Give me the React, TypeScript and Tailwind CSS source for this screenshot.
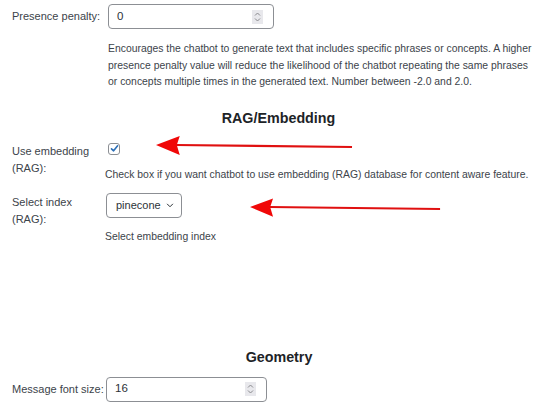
import React from 'react';

const font = { fontFamily: '"Liberation Sans", Arial, sans-serif' };

const Spinner = () => (
    <div className="absolute right-[10px] top-1/2 -translate-y-1/2 w-[11px] h-[14px] bg-[#e8e8ec] flex flex-col items-center justify-center">
        <svg width="7" height="12" viewBox="0 0 7 12" fill="none" stroke="#8a8a8e" strokeWidth="1">
            <path d="M1 4.5L3.5 2L6 4.5" />
            <path d="M1 7.5L3.5 10L6 7.5" />
        </svg>
    </div>
);

const NumberField = ({ value, width }: { value: string; width: string }) => (
    <div className={`relative shrink-0 ${width} h-[25px] border border-[#8c8f94] rounded-[4px] bg-white flex items-center pl-[8px] text-[11.5px] text-[#2c3338]`}>
        {value}
        <Spinner />
    </div>
);

const Arrow = ({ className }: { className: string }) => (
    <svg className={`absolute pointer-events-none ${className}`} viewBox="0 0 200 22" fill="none">
        <line x1="20" y1="10" x2="198" y2="12" stroke="#e01010" strokeWidth="2.2" />
        <polygon points="0,10 24,1 21,10 24,20" fill="#f00808" />
    </svg>
);

export default function App() {
    return (
        <div className="relative w-[536px] h-[402px] overflow-hidden bg-white text-[#3c434a]" style={font}>
            {/* Presence penalty */}
            <div className="flex items-center pt-[4px]">
                <div className="w-[108px] shrink-0 pl-[12px] text-[11px] whitespace-nowrap">Presence penalty:</div>
                <NumberField value="0" width="w-[166px]" />
            </div>
            <p className="ml-[108px] mt-[12px] w-[428px] text-[10.4px] leading-[16.5px]">
                Encourages the chatbot to generate text that includes specific phrases or concepts. A higher presence penalty value will reduce the likelihood of the chatbot repeating the same phrases or concepts multiple times in the generated text. Number between -2.0 and 2.0.
            </p>

            <h2 className="mt-[18px] pl-[21px] text-center text-[14.3px] leading-[18px] font-bold text-[#1d2327]">RAG/Embedding</h2>

            {/* Use embedding */}
            <div className="flex mt-[16px]">
                <div className="w-[105px] shrink-0 pl-[12px] text-[11px] leading-[17px]">Use embedding<br />(RAG):</div>
                <div className="flex flex-col">
                    <div className="ml-[3px] w-[12px] h-[12px] border border-[#8c8f94] rounded-[3px] flex items-center justify-center">
                        <svg width="9" height="9" viewBox="0 0 9 9" fill="none" stroke="#2c6fb7" strokeWidth="1.6" strokeLinecap="round" strokeLinejoin="round">
                            <path d="M1.5 4.8L3.6 6.8L7.6 1.8" />
                        </svg>
                    </div>
                    <div className="mt-[12px] text-[10.4px] leading-[16px] whitespace-nowrap">
                        Check box if you want chatbot to use embedding (RAG) database for content aware feature.
                    </div>
                </div>
            </div>

            {/* Select index */}
            <div className="flex mt-[10px]">
                <div className="w-[105px] shrink-0 pl-[12px] pt-[1px] text-[11px] leading-[17px]">Select index<br />(RAG):</div>
                <div className="flex flex-col">
                    <div className="ml-[1px] h-[25px] w-[76px] border border-[#8c8f94] rounded-[4px] flex items-center pl-[9px] gap-[5px] text-[11px] text-[#2c3338]">
                        pinecone
                        <svg width="8" height="5" viewBox="0 0 9 6" fill="none" stroke="#2c3338" strokeWidth="1.2">
                            <path d="M1 1L4.5 4.5L8 1" />
                        </svg>
                    </div>
                    <div className="mt-[11px] text-[10.4px] leading-[16px]">Select embedding index</div>
                </div>
            </div>

            <h2 className="mt-[103px] pl-[22px] text-center text-[14.3px] leading-[18px] font-bold text-[#1d2327]">Geometry</h2>

            {/* Message font size */}
            <div className="flex items-center mt-[11px]">
                <div className="w-[106px] shrink-0 pl-[12px] text-[11px] whitespace-nowrap">Message font size:</div>
                <NumberField value="16" width="w-[161px]" />
            </div>

            <Arrow className="left-[156px] top-[135px] w-[198px] h-[22px]" />
            <Arrow className="left-[250px] top-[197px] w-[192px] h-[22px]" />
        </div>
    );
}
